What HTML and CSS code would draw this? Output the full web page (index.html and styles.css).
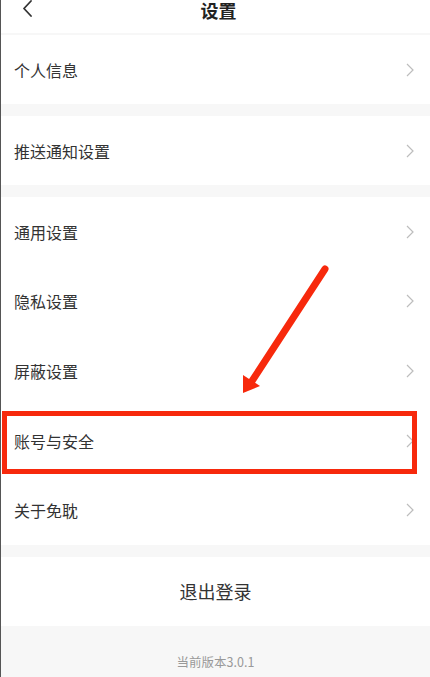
FILE: index.html
```html
<!DOCTYPE html>
<html lang="zh">
<head>
<meta charset="utf-8">
<link rel="stylesheet" href="styles.css">
</head>
<body>
<div class="page">
  <header class="header">
    <svg class="back" width="12" height="18" viewBox="0 0 12 18"><polyline points="9,1 2,8.5 9,16" fill="none" stroke="#333" stroke-width="1.8" stroke-linecap="round" stroke-linejoin="round"/></svg>
    <div class="title">设置</div>
  </header>
  <div class="gap small"></div>
  <div class="group">
    <div class="row"><span>个人信息</span><svg class="chev" width="8" height="14" viewBox="0 0 8 14"><polyline points="1,1 7,7 1,13" fill="none" stroke="#bdbdbd" stroke-width="1.2"/></svg></div>
  </div>
  <div class="gap"></div>
  <div class="group">
    <div class="row"><span>推送通知设置</span><svg class="chev" width="8" height="14" viewBox="0 0 8 14"><polyline points="1,1 7,7 1,13" fill="none" stroke="#bdbdbd" stroke-width="1.2"/></svg></div>
  </div>
  <div class="gap"></div>
  <div class="group">
    <div class="row r5"><span>通用设置</span><svg class="chev" width="8" height="14" viewBox="0 0 8 14"><polyline points="1,1 7,7 1,13" fill="none" stroke="#bdbdbd" stroke-width="1.2"/></svg></div>
    <div class="row r5"><span>隐私设置</span><svg class="chev" width="8" height="14" viewBox="0 0 8 14"><polyline points="1,1 7,7 1,13" fill="none" stroke="#bdbdbd" stroke-width="1.2"/></svg></div>
    <div class="row r5"><span>屏蔽设置</span><svg class="chev" width="8" height="14" viewBox="0 0 8 14"><polyline points="1,1 7,7 1,13" fill="none" stroke="#bdbdbd" stroke-width="1.2"/></svg></div>
    <div class="row r5"><span>账号与安全</span><svg class="chev" width="8" height="14" viewBox="0 0 8 14"><polyline points="1,1 7,7 1,13" fill="none" stroke="#bdbdbd" stroke-width="1.2"/></svg></div>
    <div class="row r5"><span>关于免耽</span><svg class="chev" width="8" height="14" viewBox="0 0 8 14"><polyline points="1,1 7,7 1,13" fill="none" stroke="#bdbdbd" stroke-width="1.2"/></svg></div>
  </div>
  <div class="gap"></div>
  <div class="logout">退出登录</div>
  <footer class="footer">当前版本3.0.1</footer>

  <div class="highlight"></div>
  <svg class="arrow" width="430" height="677" viewBox="0 0 430 677">
    <line x1="325" y1="269" x2="252" y2="381" stroke="#f7290c" stroke-width="7" stroke-linecap="round"/>
    <polygon points="243,375 243,393 260,386" fill="#f7290c"/>
  </svg>
</div>
</body>
</html>
```
FILE: styles.css
```css
* { box-sizing: border-box; }
html, body { margin: 0; padding: 0; }
body {
  width: 430px;
  height: 677px;
  overflow: hidden;
  background: #f7f7f7;
  font-family: "Noto Sans CJK SC", "Noto Sans", sans-serif;
  color: #333;
}
.page {
  position: relative;
  width: 430px;
  height: 677px;
  display: flex;
  flex-direction: column;
  border-left: 1px solid #555;
}
.header {
  height: 33px;
  background: #fff;
  display: flex;
  align-items: flex-start;
  justify-content: center;
  position: relative;
}
.back {
  position: absolute;
  left: 21px;
  top: 0;
}
.title {
  font-size: 18px;
  font-weight: bold;
  color: #222;
  line-height: 20px;
  margin-top: 0;
  margin-left: 6px;
}
.gap { height: 12px; background: #f7f7f7; }
.gap.small { height: 2px; }
.group { background: #fff; }
.row {
  height: 69px;
  display: flex;
  align-items: center;
  justify-content: space-between;
  padding: 0 16px 0 13px;
  font-size: 16px;
  color: #333;
}
.row.r5 { height: 69.6px; }
.chev { display: block; }
.logout {
  height: 69px;
  background: #fff;
  display: flex;
  align-items: center;
  justify-content: center;
  font-size: 18px;
  color: #333;
}
.footer {
  flex: 1;
  background: #f7f7f7;
  display: flex;
  align-items: flex-end;
  justify-content: center;
  padding-bottom: 6px;
  font-size: 12.5px;
  color: #999;
}
.highlight {
  position: absolute;
  left: 1px;
  top: 411px;
  width: 415px;
  height: 63px;
  border: 5px solid #f7290c;
}
.arrow {
  position: absolute;
  left: -1px;
  top: 0;
  pointer-events: none;
}
```
